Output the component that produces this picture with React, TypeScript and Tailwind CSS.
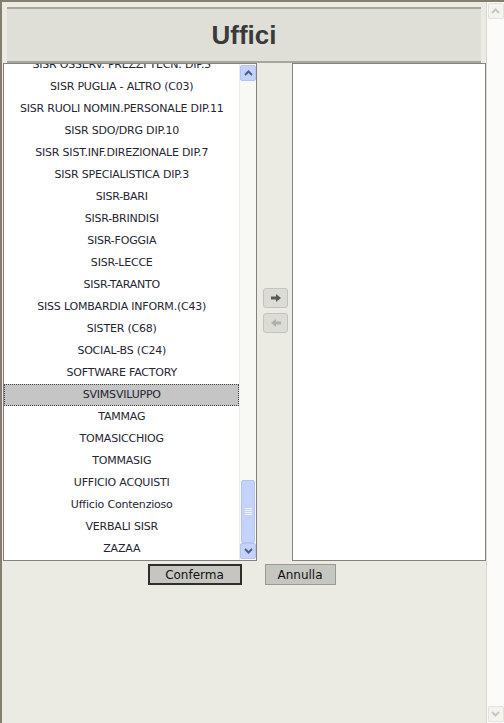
import React from "react";

const uffici = [
  "SISR OSSERV. PREZZI TECN. DIP.5",
  "SISR PUGLIA - ALTRO (C03)",
  "SISR RUOLI NOMIN.PERSONALE DIP.11",
  "SISR SDO/DRG DIP.10",
  "SISR SIST.INF.DIREZIONALE DIP.7",
  "SISR SPECIALISTICA DIP.3",
  "SISR-BARI",
  "SISR-BRINDISI",
  "SISR-FOGGIA",
  "SISR-LECCE",
  "SISR-TARANTO",
  "SISS LOMBARDIA INFORM.(C43)",
  "SISTER (C68)",
  "SOCIAL-BS (C24)",
  "SOFTWARE FACTORY",
  "SVIMSVILUPPO",
  "TAMMAG",
  "TOMASICCHIOG",
  "TOMMASIG",
  "UFFICIO ACQUISTI",
  "Ufficio Contenzioso",
  "VERBALI SISR",
  "ZAZAA",
];

const selected = "SVIMSVILUPPO";

const Chevron = ({ up, color }: { up?: boolean; color: string }) => (
  <svg width="9" height="6" viewBox="0 0 9 6">
    <path
      d={up ? "M1 5 L4.5 1.5 L8 5" : "M1 1 L4.5 4.5 L8 1"}
      fill="none"
      stroke={color}
      strokeWidth="2"
    />
  </svg>
);

const XpArrow = ({ up }: { up?: boolean }) => (
  <div className="w-[16px] h-[16px] rounded-[2px] border border-[#b4c6f0] bg-[#c3d3fb] flex items-center justify-center">
    <Chevron up={up} color="#4d6185" />
  </div>
);

const PageArrow = ({ up }: { up?: boolean }) => (
  <div className="w-[16px] h-[16px] rounded-[2px] border border-[#e3e2dc] bg-[#f4f3ee] flex items-center justify-center">
    <Chevron up={up} color="#c9c8c0" />
  </div>
);

const ListScrollbar = () => (
  <div className="w-[17px] h-full bg-[#f8f8f4] border-l border-[#eeede8] flex flex-col items-center py-[1px]">
    <XpArrow up />
    <div className="flex-1 w-full flex flex-col justify-end">
      <div className="h-[63px] mx-[1px] rounded-[2px] border border-[#b4c6f0] bg-[#c3d3fb] flex flex-col items-center justify-center gap-[1px]">
        <div className="w-[7px] h-[1px] bg-[#eef3ff]" />
        <div className="w-[7px] h-[1px] bg-[#eef3ff]" />
        <div className="w-[7px] h-[1px] bg-[#eef3ff]" />
        <div className="w-[7px] h-[1px] bg-[#eef3ff]" />
      </div>
    </div>
    <XpArrow />
  </div>
);

export default function App() {
  return (
    <div
      className="w-[504px] h-[723px] flex bg-[#ebebe4] border-l-2 border-t-2 border-[#857e6f] overflow-hidden"
      style={{ fontFamily: "'DejaVu Sans', 'Liberation Sans', sans-serif" }}
    >
      <div className="w-[485px] flex flex-col border-r border-[#d8d7d0]">
        <div className="mx-[5px] mt-[5px] h-[56px] bg-[#dfdfd8] border-t-2 border-b-2 border-[#a8a59b] flex items-center justify-center">
          <h1
            className="text-[26px] font-bold text-[#3a3a3a] leading-none"
            style={{ fontFamily: "'Liberation Sans', Arial, sans-serif" }}
          >
            Uffici
          </h1>
        </div>

        <div className="flex ml-[1px] h-[498px]">
          <div className="w-[255px] h-full bg-white border border-[#828282] flex overflow-hidden">
            <div className="flex-1 overflow-hidden">
              <ul className="-mt-[10px]">
                {uffici.map((u) => (
                  <li
                    key={u}
                    className={`h-[22px] flex items-center justify-center text-[11px] tracking-[-0.2px] text-[#262633] whitespace-nowrap ${
                      u === selected
                        ? "bg-[#c5c5c5] border border-dotted border-[#444]"
                        : ""
                    }`}
                  >
                    {u}
                  </li>
                ))}
              </ul>
            </div>
            <ListScrollbar />
          </div>

          <div className="w-[35px] flex flex-col items-center justify-center gap-[5px] pl-[2px] pb-[4px]">
            <button className="w-[25px] h-[20px] rounded-[3px] border border-[#c4c3bb] bg-[#dcdcd6] flex items-center justify-center">
              <svg width="12" height="10" viewBox="0 0 12 10">
                <path d="M1 3.5 H6 V1 L11 5 L6 9 V6.5 H1 Z" fill="#5a5a5a" />
              </svg>
            </button>
            <button className="w-[25px] h-[20px] rounded-[3px] border border-[#c4c3bb] bg-[#dcdcd6] flex items-center justify-center">
              <svg width="12" height="10" viewBox="0 0 12 10">
                <path d="M11 3.5 H6 V1 L1 5 L6 9 V6.5 H11 Z" fill="#b0b0ab" />
              </svg>
            </button>
          </div>

          <div className="w-[194px] h-full bg-white border border-[#828282]" />
        </div>

        <div
          className="flex justify-center gap-[23px] mt-[3px] pr-[5px]"
          style={{ fontFamily: "'DejaVu Sans', sans-serif" }}
        >
          <button className="w-[94px] h-[21px] bg-[#c6c6c1] border-2 border-[#2e2e2e] text-[12px] text-[#111] flex items-center justify-center">
            Conferma
          </button>
          <button className="w-[71px] h-[21px] bg-[#c6c6c1] border border-[#9a9a95] text-[12px] text-[#111] flex items-center justify-center">
            Annulla
          </button>
        </div>
      </div>

      <div className="w-[17px] h-full bg-[#fbfbf9] flex flex-col justify-between items-center pt-[1px] pb-[1px]">
        <PageArrow up />
        <PageArrow />
      </div>
    </div>
  );
}
